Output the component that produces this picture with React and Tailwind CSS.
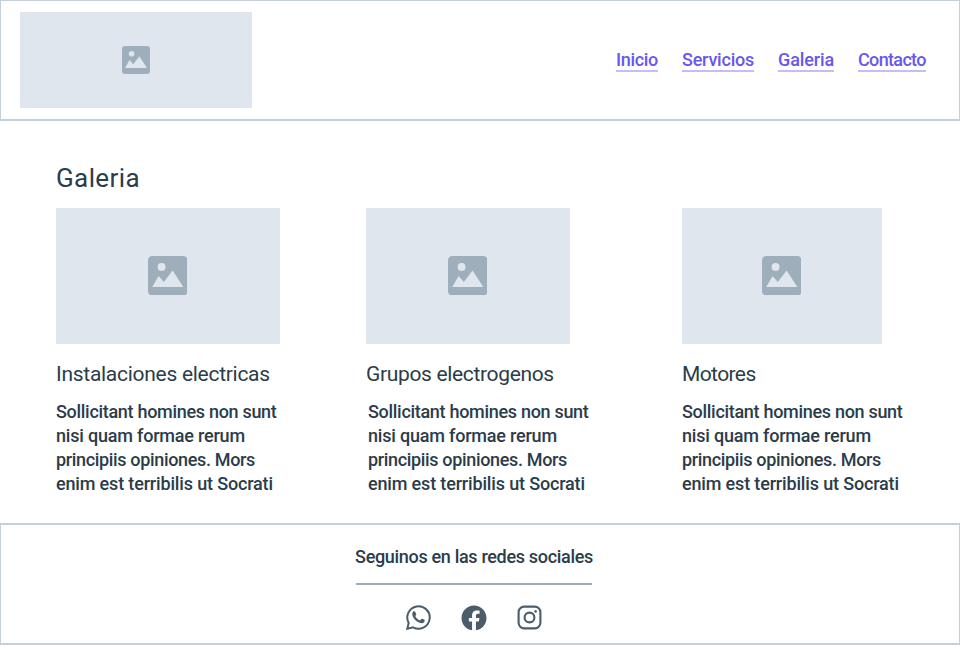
import { RiFacebookCircleFill } from "react-icons/ri";

const links = [
  { label: "Inicio", style: "w-[42px] tracking-[-0.32px]" },
  { label: "Servicios", style: "w-[72px] tracking-[-0.22px]" },
  { label: "Galeria", style: "w-[56px] tracking-[-0.11px]" },
  { label: "Contacto", style: "w-[68px] tracking-[-0.66px]" },
];

const lines = [
  { text: "Sollicitant homines non sunt", style: "tracking-[-0.3px]" },
  { text: "nisi quam formae rerum", style: "tracking-[-0.2px]" },
  { text: "principiis opiniones. Mors", style: "tracking-[-0.34px]" },
  { text: "enim est terribilis ut Socrati", style: "tracking-[-0.16px]" },
];

const cards = [
  { title: "Instalaciones electricas", column: "w-[310px]", image: "w-[224px]", heading: "tracking-[-0.28px]", body: "" },
  { title: "Grupos electrogenos", column: "w-[316px]", image: "w-[204px]", heading: "tracking-[-0.34px]", body: "pl-0.5" },
  { title: "Motores", column: "w-[240px]", image: "w-[200px]", heading: "tracking-[-0.6px]", body: "" },
];

function PictureIcon({ className }) {
  return (
    <svg viewBox="0 0 28 28" className={className} aria-hidden="true">
      <rect width="28" height="28" rx="3" fill="#9eaebb" />
      <circle cx="9.6" cy="7.7" r="2.8" fill="#dfe6ee" />
      <path d="M3 22 7.5 14.1 11.2 18.3 17.4 10.2 25 22Z" fill="#dfe6ee" />
    </svg>
  );
}

function WhatsappIcon() {
  return (
    <svg viewBox="0 0 25 25" className="size-[25px]" aria-hidden="true">
      <path d="M1.3 23.8 2.7 17.9A11.2 11.2 0 1 1 7.1 22.3Z" fill="none" stroke="currentColor" strokeWidth="2" strokeLinejoin="miter" />
      <path d="M7.2 6.6C7.7 6 8.9 6 9.2 6.7L10.2 9.2C10.4 9.9 9.5 10.6 9.2 11 10.2 13 12 14.6 14 15.4L15.4 13.9C15.8 13.5 16.4 13.7 18.4 14.8 19 15.2 18.8 17 17.5 17.8 15.5 18.9 11.5 17.5 9 14.7 6.3 11.8 5.5 8.6 7.2 6.6Z" fill="currentColor" />
    </svg>
  );
}

function InstagramIcon() {
  return (
    <svg viewBox="0 0 25 25" className="size-[25px]" aria-hidden="true">
      <g fill="none" stroke="currentColor" strokeWidth="2.1">
        <rect x="1.6" y="1.6" width="21.8" height="21.8" rx="5.6" />
        <circle cx="12.5" cy="12.5" r="4.9" />
      </g>
      <circle cx="18.6" cy="6.4" r="1.3" fill="currentColor" />
    </svg>
  );
}

function Card({ title, column, image, heading, body }) {
  return (
    <article className={column}>
      <div className={`flex h-[136px] items-center justify-center bg-[#dfe6ee] ${image}`}>
        <PictureIcon className="mr-px mb-px size-[39.6px]" />
      </div>
      <h2 className={`mt-4 text-[21px] leading-7 whitespace-nowrap ${heading}`}>{title}</h2>
      <p className={`mt-3 text-[18px] leading-6 font-medium whitespace-nowrap ${body}`}>
        {lines.map((line) => (
          <span key={line.text} className={`block ${line.style}`}>{line.text}</span>
        ))}
      </p>
    </article>
  );
}

export default function App() {
  return (
    <div className="h-[664px] w-[960px] overflow-hidden bg-white font-['Roboto',sans-serif] text-[#2b3c4a]">
      <header className="flex h-[121px] items-start justify-between border border-b-2 border-[#c3d0dc] pt-[11px] pr-[33px] pl-[19px]">
        <div className="flex h-24 w-[232px] items-center justify-center bg-[#dfe6ee]">
          <PictureIcon className="size-7" />
        </div>
        <nav className="mt-9 flex gap-6">
          {links.map((link) => (
            <a key={link.label} href="#" className={`h-6 border-b-2 border-[#c4bdfa] text-[18px] leading-6 font-medium whitespace-nowrap text-[#6757f0] ${link.style}`}>
              {link.label}
            </a>
          ))}
        </nav>
      </header>
      <main className="h-[402px] pt-[41px] pl-14">
        <h1 className="h-[46px] text-[26px] leading-8 tracking-[0.4px]">Galeria</h1>
        <div className="flex">
          {cards.map((card) => (
            <Card key={card.title} {...card} />
          ))}
        </div>
      </main>
      <footer className="flex h-[122px] flex-col items-center border-x border-y-2 border-[#c3d0dc] pt-5 pr-3">
        <p className="text-[18px] leading-6 font-medium tracking-[-0.32px]">Seguinos en las redes sociales</p>
        <div className="mt-3.5 h-0.5 w-[236px] shrink-0 bg-[#9aabba]" />
        <div className="mt-[18px] flex h-[30px] items-center gap-[30px] pb-px text-[#4b5d6b]">
          <WhatsappIcon />
          <RiFacebookCircleFill size={30} className="-mx-[2px]" />
          <InstagramIcon />
        </div>
      </footer>
    </div>
  );
}
